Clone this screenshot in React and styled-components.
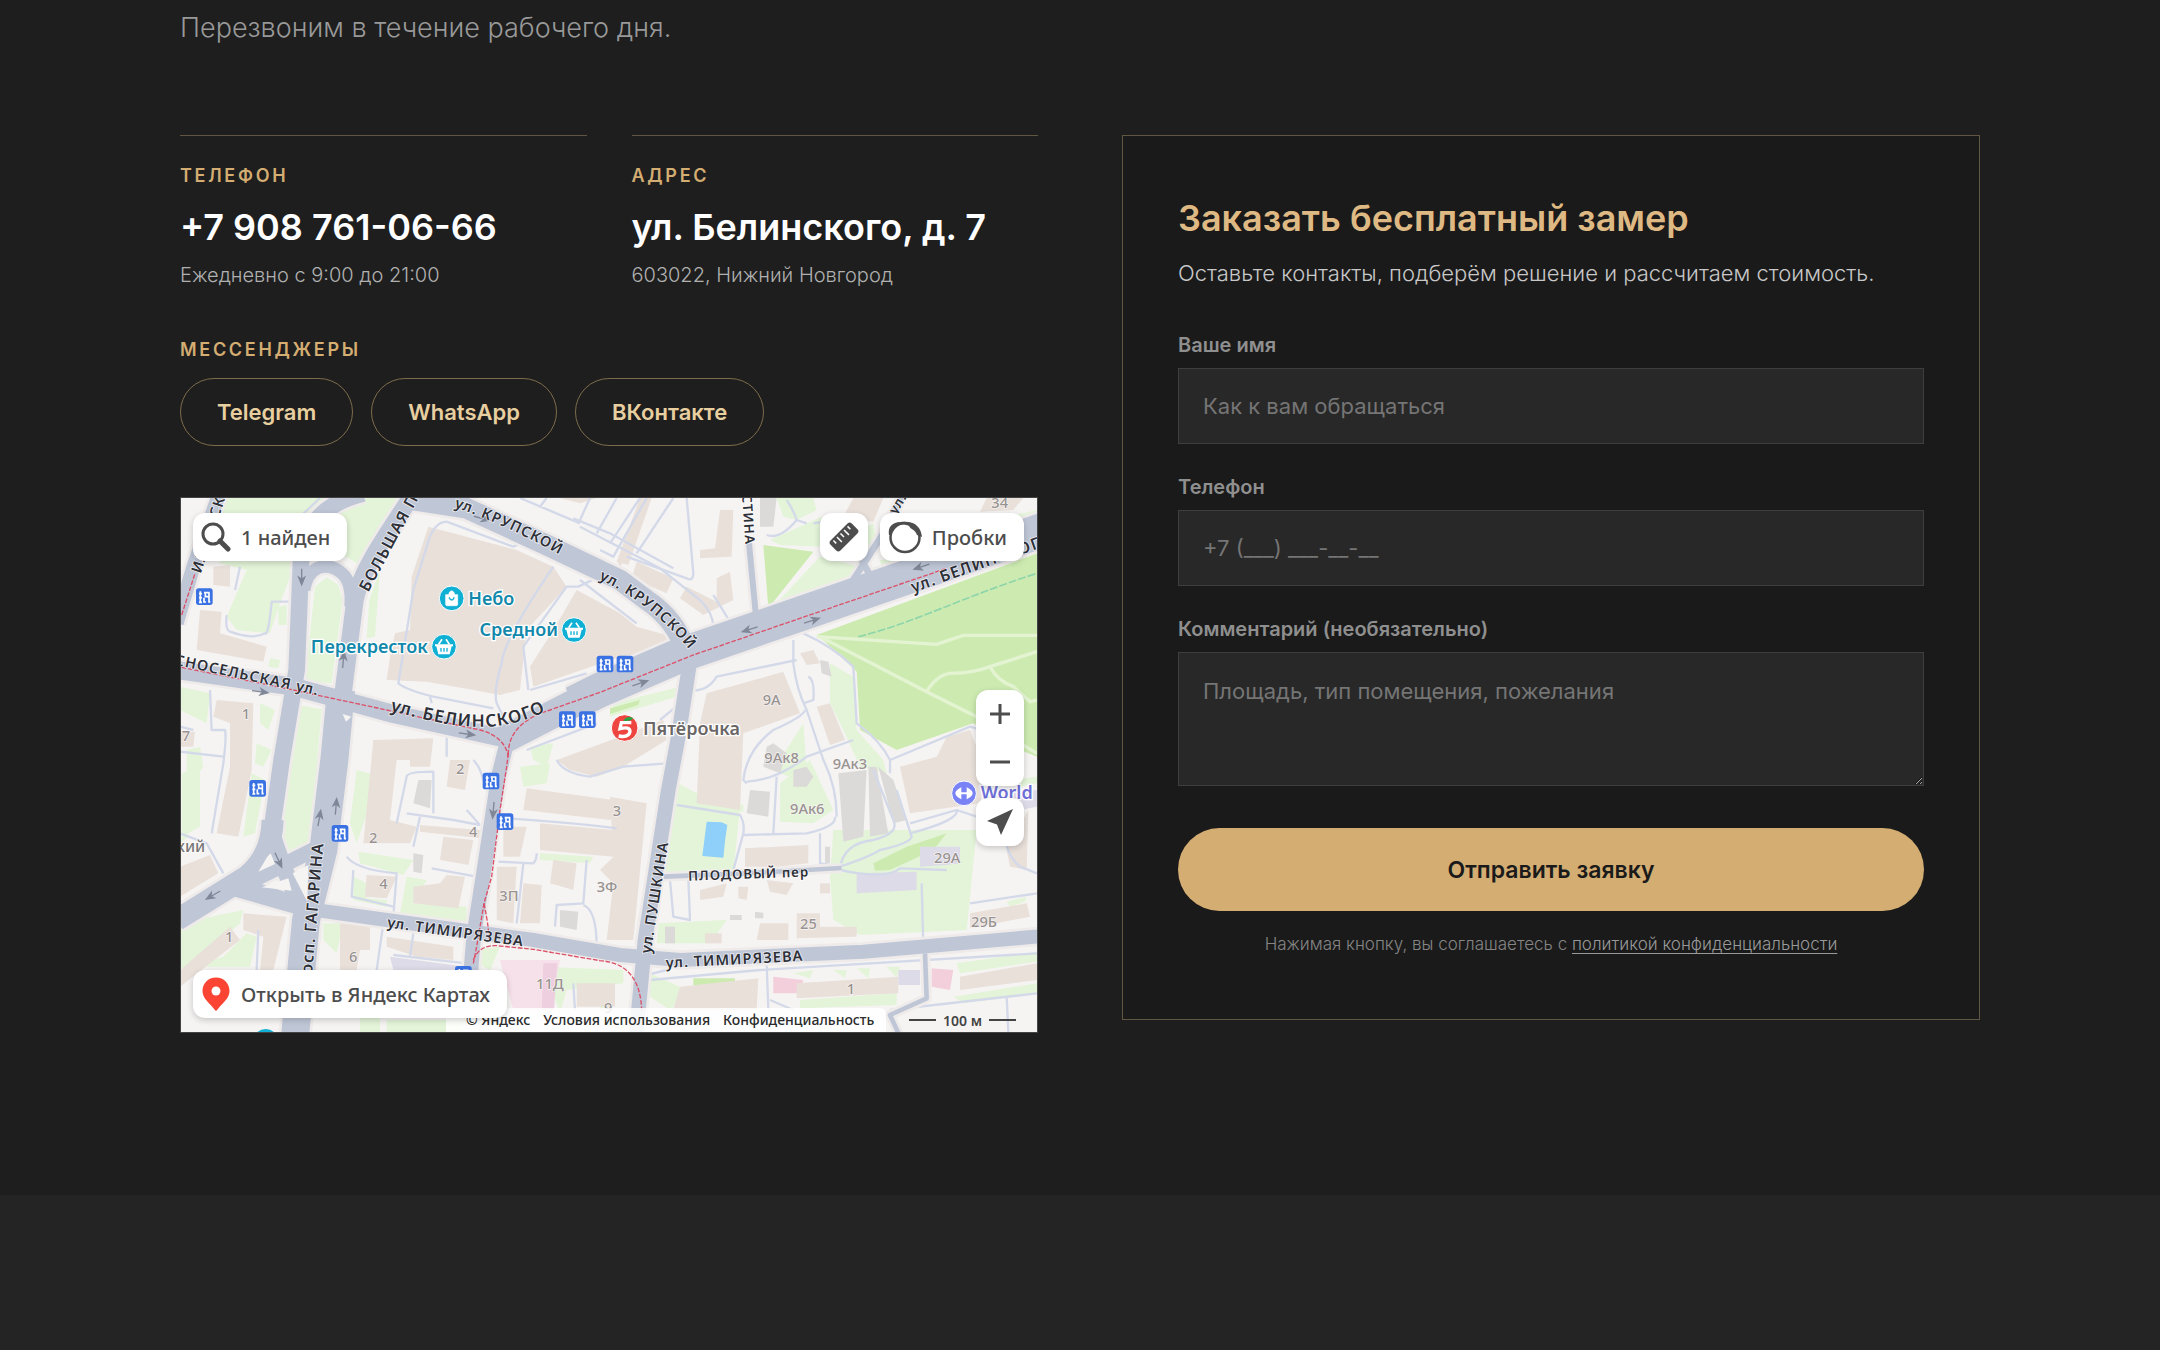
import React, { useState } from 'react';
import styled, { createGlobalStyle } from 'styled-components';

const GlobalStyle = createGlobalStyle`
  * {
    box-sizing: border-box;
  }

  body {
    margin: 0;
    background: #242424;
    color: #fff;
    font-family: 'Inter', sans-serif;
  }
`;

const Section = styled.section`
  background: #1e1e1e;
  padding: 6px 40px 162px;
`;

const Container = styled.div`
  max-width: 1800px;
  margin: 0 auto;
`;

const Lead = styled.p`
  margin: 0 0 85px;
  font-size: 27px;
  line-height: 44px;
  font-weight: 300;
  color: #999;
`;

const Columns = styled.div`
  display: grid;
  grid-template-columns: repeat(auto-fit, minmax(min(100%, 640px), 1fr));
  gap: 84px;
  align-items: start;
`;

const InfoGrid = styled.div`
  display: grid;
  grid-template-columns: 1fr 1fr;
  gap: 45px;
`;

const InfoItem = styled.div`
  border-top: 1px solid #615642;
  padding-top: 28px;
`;

const Caption = styled.div`
  font-size: 18px;
  line-height: 24px;
  font-weight: 600;
  letter-spacing: 0.15em;
  text-transform: uppercase;
  color: #d4ad72;
`;

const InfoTitle = styled.div`
  margin: 17px 0 10px;
  font-size: 36px;
  line-height: 44px;
  font-weight: 600;
  color: #fff;

  a {
    color: inherit;
    text-decoration: none;
  }
`;

const InfoNote = styled.div`
  font-size: 20px;
  line-height: 32px;
  font-weight: 300;
  color: #b0b0b0;
`;

const Messengers = styled.div`
  margin: 47px 0 51px;
`;

const Pills = styled.div`
  display: flex;
  flex-wrap: wrap;
  gap: 18px;
  margin-top: 16px;
`;

const Pill = styled.a`
  display: flex;
  align-items: center;
  height: 68px;
  padding: 0 36px;
  border: 1px solid #7d6c4c;
  border-radius: 68px;
  font-size: 22px;
  font-weight: 600;
  color: #e8cfa0;
  text-decoration: none;
`;

const Card = styled.form`
  padding: 54px 55px 61px;
  background: #1a1a1a;
  border: 1px solid #615642;
`;

const CardTitle = styled.h3`
  margin: 0;
  font-size: 36px;
  line-height: 56px;
  font-weight: 600;
  color: #dfb983;
`;

const CardText = styled.p`
  margin: 9px 0 39px;
  font-size: 22px;
  line-height: 36px;
  font-weight: 300;
  color: #c8c8c8;
`;

const Field = styled.div`
  display: flex;
  flex-direction: column;
  gap: 8px;
  margin-bottom: 28px;

  label {
    font-size: 20px;
    line-height: 30px;
    font-weight: 600;
    color: #8f8f8f;
  }
`;

const Input = styled.input`
  width: 100%;
  height: ${p => (p.$tall ? 134 : 76)}px;
  padding: ${p => (p.$tall ? '20px' : '0')} 24px;
  border: 1px solid #3e3e3e;
  border-radius: 0;
  background: #282828;
  font-family: inherit;
  font-size: 22px;
  line-height: 36px;
  color: #fff;
  outline: none;
  resize: vertical;

  &::placeholder {
    color: #757575;
  }
`;

const Submit = styled.button`
  width: 100%;
  height: 83px;
  margin-top: 14px;
  border: 0;
  border-radius: 83px;
  background: #d4ad72;
  font-family: inherit;
  font-size: 23px;
  font-weight: 600;
  color: #1a1a1a;
  cursor: pointer;
`;

const Consent = styled.p`
  margin: 19px 0 0;
  font-size: 17px;
  line-height: 28px;
  font-weight: 300;
  text-align: center;
  color: #858585;

  a {
    color: #999;
    text-underline-offset: 3px;
  }
`;

/* ---------- map ---------- */

const MapFrame = styled.div`
  position: relative;
  aspect-ratio: 858 / 536;
  overflow: hidden;
  border: 1px solid #444;
  background: #f6f4f3;
  font-family: 'Noto Sans', sans-serif;
  font-weight: 500;
  color: #4d4d4d;

  > svg {
    display: block;
    width: 100%;
    height: 100%;
  }
`;

const TopBar = styled.div`
  position: absolute;
  top: 15px;
  left: 12px;
  right: 13px;
  display: flex;
  gap: 12px;
`;

const MapButton = styled.button`
  display: flex;
  align-items: center;
  justify-content: ${p => (p.$square ? 'center' : 'flex-start')};
  gap: 10px;
  width: ${p => (p.$square ? '48px' : 'auto')};
  height: 48px;
  padding: ${p => (p.$square ? '0' : '0 17px 0 8px')};
  border: 0;
  border-radius: 12px;
  background: #fff;
  box-shadow: 0 2px 6px rgba(0, 0, 0, 0.2);
  font: inherit;
  font-size: 20px;
  color: #4d4d4d;
  text-decoration: none;
  white-space: nowrap;

  &.push {
    margin-left: auto;
  }
`;

const SideBar = styled.div`
  position: absolute;
  top: 192px;
  right: 13px;
  display: flex;
  flex-direction: column;
  gap: 12px;
`;

const ZoomGroup = styled.div`
  border-radius: 12px;
  background: #fff;
  box-shadow: 0 2px 6px rgba(0, 0, 0, 0.2);

  button {
    box-shadow: none;
    background: none;
  }
`;

const OpenMap = styled.div`
  position: absolute;
  left: 12px;
  bottom: 14px;
`;

const Copyright = styled.div`
  position: absolute;
  left: 265px;
  bottom: 0;
  display: flex;
  gap: 13px;
  height: 24px;
  padding: 0 12px 0 20px;
  background: rgba(255, 255, 255, 0.85);
  border-radius: 0 6px 0 0;
  font-size: 14px;
  line-height: 24px;

  a {
    color: #2b2b2b;
    text-decoration: none;
  }
`;

const Scale = styled.div`
  position: absolute;
  right: 21px;
  bottom: 0;
  display: flex;
  align-items: center;
  gap: 7px;
  height: 24px;
  font-size: 14px;
  font-weight: 600;
  color: #444;

  &::before,
  &::after {
    content: '';
    width: 27px;
    height: 2px;
    background: #444;
  }
`;

const greens = [
  '130,24 440,24 350,110 342,230 300,340 270,430 170,420 140,380 200,240 120,220',
  '560,24 690,24 640,110 545,230 500,200 430,205 385,200 385,130 450,70',
  '405,290 440,262 475,285 488,330 455,580 375,572',
  '355,645 425,658 412,810 388,1065 335,1088 300,1040 325,810',
  '568,330 600,240 585,440 560,445', '0,590 90,610 80,700 0,660', '20,780 60,770 70,830 20,900',
  '5,850 60,830 60,1010 5,1040', '215,850 255,870 225,1030 190,1040', '240,640 285,660 265,720 240,700',
  '230,760 275,780 250,830 225,820', '295,350 320,345 320,405 295,405', '270,505 300,510 295,535 265,530',
  '1790,24 1900,24 1910,60 1850,90 1810,80', '1770,150 1925,80 1930,170 1800,165',
  '1920,200 2040,230 1980,290 1770,360', '2040,120 2080,100 2090,160 2050,230 2030,200',
  '2100,210 2400,200 2110,260', '2390,100 2571,60 2571,80 2400,130',
  '1485,905 1680,955 1660,1150 1450,1170', '1495,880 1550,910 1690,945 1690,965 1490,925',
  '1800,880 1890,810 1960,960 1900,1000 1800,995', '1780,840 1870,700 1880,840 1850,870',
  '1950,520 2020,560 2030,720 2110,810 2120,850 2040,830 1990,720 1950,640',
  '1960,1020 2390,1020 2360,1320 2040,1335 1960,1290 1950,1160', '1435,1300 1640,1290 1590,1360 1430,1360',
  '1020,830 1110,820 1100,880 1030,890', '1050,770 1120,760 1100,830 1060,810',
  '1300,640 1500,590 1490,620 1290,680', '535,1085 700,1110 670,1155 540,1120',
  '680,1160 740,1170 700,1240 860,1250 860,1300 660,1270', '520,1160 560,1180 560,1225 620,1230 620,1250 520,1230',
  '0,1300 190,1260 180,1300 20,1440 0,1430', '40,1430 130,1400 200,1330 230,1340 210,1430',
  '430,1300 490,1300 470,1390 430,1350', '600,860 530,1060 510,1000 530,840', '1080,1090 1240,1100 1230,1120 1080,1110',
  '1090,1430 1330,1440 1330,1480 1160,1500 1140,1570', '890,1380 960,1370 930,1440 890,1420',
  '1260,1450 1310,1450 1290,1560 1260,1560', '1410,1450 1520,1500 1470,1560 1410,1520',
  '1840,1450 1900,1440 1890,1465', '1960,1440 2000,1440 1995,1465', '2030,1435 2070,1435 2065,1465',
  '2120,1430 2160,1430 2150,1465', '1860,1530 2150,1510 2150,1545 1860,1555', '2330,1420 2571,1385 2571,1415 2340,1450',
  '2320,1520 2571,1480 2571,1510 2350,1540', '2480,1235 2540,1220 2535,1235 2490,1250', '1460,1520 1480,1510 1480,1560 1460,1550',
  '540,1560 600,1550 600,1626 540,1626', '620,1590 860,1590 840,1626 620,1626',
  '2490,870 2571,860 2571,880 2520,890', '0,1060 20,1000 25,1040',
];

const brightGreens = [
  '1910,435 2571,190 2571,800 2520,780 2380,700 2150,780 2040,720 2030,545 1940,460',
  '1750,165 1900,185 1765,355', '2080,1120 2180,1070 2300,1030 2260,1080 2130,1140 2085,1142',
  '1540,1465 1665,1465 1665,1486 1540,1486', '1290,655 1380,630 1375,645 1290,672',
];

const buildings = [
  '745,110 820,130 1010,180 1120,230 1160,290 1040,420 1020,600 960,615 880,600 740,575 620,570 630,500 645,430 690,420 695,260',
  '1190,300 1320,370 1370,410 1480,440 1450,480 1320,500 1060,590 1050,530 1120,420',
  '60,360 125,365 120,430 260,470 250,515 50,480', '110,630 220,640 215,840 175,1040 110,1030 150,830 150,700 100,680',
  '580,750 760,745 750,830 690,830 690,810 650,810 630,990 710,1010 690,1060 550,1060',
  '100,230 150,225 150,290 100,285', '0,725 45,725 40,770 0,770',
  '1580,610 1810,545 1860,670 1690,730 1680,960 1550,940 1560,700', '1620,60 1660,60 1655,200 1560,205 1560,180 1605,175',
  '1370,215 1480,265 1460,310 1355,265', '1520,290 1610,335 1610,265 1650,245 1660,330 1570,375 1500,325',
  '1380,24 1415,24 1345,225 1310,215', '2020,24 2110,24 2080,95 1990,80', '2420,24 2530,24 2500,60 2400,65',
  '2300,740 2370,720 2420,850 2400,940 2190,970 2160,830 2270,800', '1910,650 1950,640 1995,750 1950,765',
  '1860,490 1900,480 1920,520 1880,525', '1130,810 1320,740 1450,690 1460,750 1330,830 1250,860 1170,840',
  '1040,895 1300,930 1350,940 1330,980 1290,990 1030,960', '1080,1000 1300,1020 1300,1100 1080,1080',
  '1290,920 1400,940 1360,1350 1280,1350 1300,1180 1260,1140 1300,1100', '970,1010 1040,1010 1020,1100 970,1100',
  '950,1130 1010,1130 1000,1300 950,1290', '1120,1110 1190,1120 1180,1200 1110,1180', '1030,1180 1085,1185 1080,1300 1020,1300',
  '790,1040 880,1050 865,1125 780,1110', '700,1190 780,1180 800,1155 855,1160 835,1255 700,1240',
  '560,1155 650,1160 620,1225 555,1220', '480,1300 570,1300 570,1380 540,1380 530,1440 480,1440',
  '620,1340 820,1370 820,1410 710,1400 620,1370', '190,1270 320,1280 280,1440 240,1440 250,1340 190,1320',
  '150,1310 180,1350 0,1490 0,1440', '0,1130 90,1095 115,1150 0,1220', '1190,1480 1305,1480 1305,1550 1190,1550',
  '810,810 870,810 855,900 800,890', '720,1005 900,1020 900,1045 720,1025', '1695,1075 1885,1065 1885,1120 1790,1130 1695,1130',
  '1560,1200 1640,1180 1630,1220 1560,1230', '1675,1190 1705,1190 1700,1230 1675,1225', '1760,1170 1840,1180 1820,1215 1770,1205',
  '1920,1180 1950,1180 1950,1210 1920,1210', '1850,1270 1920,1270 1920,1310 2030,1310 2030,1340 1850,1345',
  '1740,1300 1825,1300 1825,1350 1730,1350', '1575,1330 1625,1330 1625,1360 1575,1360',
  '1500,1490 1735,1465 1730,1560 1480,1560', '1850,1480 2155,1460 2155,1510 1850,1525',
  '2340,1460 2571,1420 2571,1470 2340,1500', '2370,1270 2540,1240 2550,1280 2370,1315', '2480,1080 2545,960 2540,1140 2490,1130',
  '1140,24 1250,24 1200,40', '1310,210 1340,200 1320,230',
];

const greys = [
  '1975,850 2060,840 2050,1040 1990,1055', '2065,830 2090,830 2125,1030 2070,1040', '2095,830 2140,870 2180,990 2140,1000',
  '715,870 755,870 750,955 700,940', '700,1090 730,1095 725,1150 700,1145', '1760,770 1780,760 1820,790 1800,850 1750,830',
  '1840,840 1880,830 1900,860 1880,890 1840,890', '1710,900 1770,905 1765,980 1700,970', '1920,510 1945,515 1955,560 1925,550',
  '1140,1260 1195,1265 1190,1320 1140,1310', '1650,1275 1685,1275 1685,1290 1650,1290', '1725,1265 1750,1268 1750,1285 1725,1285',
  '1455,1310 1485,1310 1485,1360 1455,1360', '1740,24 1790,24 1780,110 1740,110', '1935,1070 1950,1070 1950,1120 1935,1120',
];

const lavender = [
  '2220,1070 2340,1070 2340,1120 2300,1125 2220,1130', '2030,1150 2210,1145 2210,1200 2030,1210',
  '2155,1440 2220,1440 2220,1485 2155,1485', '630,1400 860,1430 860,1440 640,1440', '2480,910 2571,900 2571,950 2520,960',
];

const lanes = [
  'M1250,130 L1310,24 M1290,160 L1380,24 M1180,85 L1290,130 L1480,235 M1520,24 L1540,250 Q1540,275 1520,265 L1340,200',
  'M1480,24 L1370,190 M1260,180 L1300,200 L1400,24 M1020,24 L1200,100 M1100,24 L1080,50 M1230,24 L1200,90 M1200,110 L1440,235 L1560,330 Q1600,370 1600,410',
  'M1200,270 L1370,400 M1310,235 L1195,290 L1160,290 L1030,470 Q1040,560 1045,600',
  'M800,95 L1000,170 L1090,130 M800,95 Q760,95 740,170 L700,300 L655,580 Q680,600 760,620 L940,655',
  'M1120,230 Q970,450 965,520 Q940,600 950,640 L975,690 M1050,600 L1220,550 M750,620 L755,640',
  'M1600,315 L1650,395 M1580,410 L1710,375 M1850,90 L1880,100 M1760,135 Q1800,150 1850,90 Q1840,60 1820,30 M1900,100 L1960,90',
  'M340,335 L275,335 Q265,440 255,430 Q220,450 150,425 Q135,420 140,375 M180,230 L165,300',
  'M90,600 L95,720 L135,720 Q140,740 130,820 L95,1030 M0,710 L40,720 M0,785 L130,800',
  'M1520,600 Q1580,610 1610,560 L1850,510 M1840,450 L1840,520 Q1850,600 1880,660 L1930,810 Q1970,890 1970,980',
  'M1885,560 Q1905,570 1900,630 L1870,640 M1875,660 Q1870,680 1780,720 Q1700,780 1690,870 L1700,880 M1790,860 L1780,1030',
  'M1700,875 Q1790,870 1880,800 L2020,750 M1870,430 Q1960,470 2020,530 L2030,700 Q2100,750 2130,810 L2130,850 M2130,810 L2370,710 Q2420,720 2440,760',
  'M1490,945 L1680,975 Q1695,1000 1690,1030 L1660,1140 M1690,1035 L1880,1030 Q1970,1010 1965,980 M1920,1030 L1920,1120 L1980,1130',
  'M1980,1135 Q1990,1060 2080,1050 Q2160,1030 2140,990 L2080,840 M1980,1130 Q2070,1100 2100,1080 Q2190,1060 2195,1040 L2150,900',
  'M2190,1000 L2330,960 Q2340,990 2190,1030 M2330,960 L2390,980 M2470,1020 Q2480,1100 2520,1130 L2571,1150 M2370,1240 L2571,1210',
  'M1980,1140 Q2120,1170 2160,1135 L2300,1140 M2225,1180 L2230,1370 M1470,1170 L1480,1280 L1530,1290 L1525,1165',
  'M1130,810 Q1150,850 1230,860 L1330,830 L1460,820 M980,985 Q1200,1000 1310,1015 M955,1115 L1060,1120 Q1070,1110 1070,1090 M1030,1120 L1010,1300',
  'M1125,1310 L1130,1245 L1210,1240 L1220,1110 M1210,1245 Q1250,1260 1250,1370 M840,730 L960,760 M800,740 L800,800',
  'M650,1000 L680,860 Q680,845 760,845 L760,970 M680,970 L820,990 L900,1005 M720,980 L700,1070 M755,1135 L890,1160',
  'M500,1100 Q530,1140 650,1150 L640,1280 M520,1140 L515,1220 L640,1250 M610,1300 L590,1440 M700,1330 L690,1400 M640,1395 L860,1420',
  'M0,1030 L80,1060 L130,1150 M235,1320 L230,1440 M1760,1420 L1765,1560 M1410,1470 L1740,1440 L2571,1390',
  'M2130,1560 L2571,1510 M2480,1520 L2485,1626 M1770,1530 L1840,1560 M1040,780 L1250,700 M420,24 L350,90',
  'M1180,1480 L1185,1560 M880,810 Q900,830 910,870 M860,960 L900,1005 M1440,690 L1500,640 M1380,1460 L1460,1440',
];

const roads = [
  { d: 'M118,10 L40,230 L-10,400', w: 42 },
  { d: 'M550,10 C430,40 362,110 362,240 L350,540 L305,810 L278,1000', w: 50 },
  { d: 'M372,300 C385,225 440,215 480,245 Q518,270 512,350', w: 38 },
  { d: 'M700,10 C645,100 545,230 525,330 L488,620', w: 52 },
  { d: 'M483,600 L463,810 L430,1080 L378,1290 L345,1640', w: 84 },
  { d: 'M-10,540 L340,590 L640,672 L970,745', w: 54 },
  { d: 'M960,755 L1120,672 L1260,600', w: 84 },
  { d: 'M1180,640 L1260,600 L1510,492 L1860,372 L2590,120', w: 104 },
  { d: 'M700,30 L860,55 L1100,165 L1320,270 L1400,330 Q1490,390 1520,490', w: 62 },
  { d: 'M1532,500 L1495,740 L1465,900 L1395,1350 L1368,1640', w: 44 },
  { d: 'M985,740 L955,860 L912,1140 L882,1330 L872,1450', w: 44 },
  { d: 'M230,1200 L420,1262 L620,1290 L1060,1350 L1320,1395 L1500,1410 L2050,1385 L2590,1338', w: 42 },
  { d: 'M278,990 Q275,1100 200,1160 L-10,1290', w: 66 },
  { d: 'M180,1190 L300,1130 L420,1070', w: 46 },
  { d: 'M275,1030 L310,1130 L370,1270', w: 50 },
  { d: 'M150,1190 L360,1250', w: 50 },
  { d: 'M1707,160 L1730,400', w: 18 },
  { d: 'M2000,300 L2110,130 L2170,10 M2045,210 L2075,265', w: 20 },
  { d: 'M1450,1160 L1700,1150 L1985,1134', w: 14 },
  { d: 'M2235,1390 L2240,1525 L2130,1575 L2160,1640', w: 14 },
];

const transit = [
  'M5,375 L45,250',
  'M5,532 L340,600 L620,660 L900,720 Q975,740 985,800 Q980,700 1110,660 L1260,607 L1540,495 L1860,385 L2300,235',
  'M985,790 L980,830 L960,960 L935,1160 L912,1240 L890,1370 L880,1420',
  'M912,1240 Q930,1330 925,1345 M880,1410 Q900,1360 960,1368 L1060,1378 L1260,1412 Q1380,1420 1385,1560',
];

const arrows = [
  [240, 605, 8], [860, 732, 8], [905, 85, 15], [1380, 580, -18], [1895, 392, -18], [1710, 418, 162], [2225, 230, 162],
  [365, 260, 90], [490, 510, -85], [468, 950, -85], [418, 985, -80], [295, 1110, 65], [100, 1215, 150], [940, 960, 95],
];

const stops = [
  [48, 295], [1250, 497], [1310, 497], [1137, 664], [1197, 664],
  [208, 870], [455, 1005], [908, 848], [950, 970], [825, 1428],
];

const houses = [
  ['1', 185, 688], ['7', 5, 752], ['2', 828, 852], ['2', 567, 1058], ['4', 867, 1042], ['4', 598, 1197], ['6', 507, 1415],
  ['1', 135, 1356], ['3П', 958, 1234], ['3Ф', 1250, 1206], ['3', 1298, 978], ['9А', 1748, 646], ['9Ак8', 1753, 820],
  ['9Ак3', 1958, 838], ['9Ак6', 1830, 972], ['25', 1860, 1317], ['29А', 2262, 1118], ['29Б', 2373, 1310],
  ['1', 2000, 1511], ['11Д', 1068, 1497], ['34', 2434, 54], ['9', 1272, 1568],
];

const MapDrawing = () => (
  <svg viewBox="3 24 2568 1602" preserveAspectRatio="xMidYMid slice" aria-hidden="true">
    <defs>
      <path id="krupskoy1" d="M822,52 Q960,95 1180,215" />
      <path id="krupskoy2" d="M1256,268 Q1420,340 1545,500" />
      <path id="belinskogo" d="M630,662 C800,705 950,755 1140,640" />
      <path id="belinskogo2" d="M2200,308 L2590,170" />
    </defs>

    <g fill="#e3f4d8">{greens.map(p => <polygon key={p} points={p} />)}</g>
    <g fill="#cdebb1">{brightGreens.map(p => <polygon key={p} points={p} />)}</g>
    <g fill="#f6e0e9">
      <polygon points="960,1410 1140,1410 1110,1560 1000,1560" />
      <polygon fill="#eecfdf" points="1090,1420 1132,1420 1122,1560 1085,1560" />
      <polygon fill="#f3cfdc" points="1780,1460 1870,1470 1860,1510 1780,1510" />
      <polygon fill="#f3cfdc" points="2255,1435 2320,1440 2310,1500 2255,1490" />
    </g>
    <g fill="#e9e0da">{buildings.map(p => <polygon key={p} points={p} />)}</g>
    <g fill="#dcdad9">{greys.map(p => <polygon key={p} points={p} />)}</g>
    <g fill="#dedbe9">{lavender.map(p => <polygon key={p} points={p} />)}</g>
    <polygon fill="#8fd0fb" points="1580,995 1625,997 1642,1005 1636,1045 1630,1103 1567,1098" />

    <g fill="none" stroke="#e4f4d3" strokeWidth="10">
      <path d="M1910,440 L2270,463 L2350,436 L2571,436" />
      <path d="M1920,440 L2240,605 L2390,680" />
      <path d="M2240,605 Q2270,555 2310,550 Q2380,550 2430,530 L2571,485" />
      <path d="M2430,530 Q2450,570 2500,590 L2550,635 L2571,630" />
      <path d="M2530,765 L2571,790" />
    </g>
    <path d="M2035,440 C2200,400 2350,320 2571,250" fill="none" stroke="#8fd5ab" strokeWidth="5" strokeDasharray="24 6" />

    <g fill="none" stroke="#d3d9e8" strokeWidth="7" strokeLinejoin="round">
      {lanes.map(d => <path key={d} d={d} />)}
    </g>
    <g fill="none" stroke="#efebea" strokeLinejoin="round">
      {roads.map(r => <path key={r.d} d={r.d} strokeWidth={r.w + 16} />)}
    </g>
    <g fill="none" stroke="#bfc7d7" strokeLinejoin="round">
      {roads.map(r => <path key={r.d} d={r.d} strokeWidth={r.w} />)}
    </g>
    <g fill="#f6f4f3">
      <polygon points="488,672 514,680 498,695" />
      <polygon points="245,1192 325,1165 335,1202" />
      <polygon points="338,1150 385,1125 382,1235" />
      <polygon points="262,1100 272,1090 285,1122 235,1145" />
    </g>
    <g fill="none" stroke="#dc5068" strokeWidth="4" strokeDasharray="14 5">
      {transit.map(d => <path key={d} d={d} />)}
    </g>
    <g fill="#7f8798" stroke="#7f8798" strokeWidth="4">
      {arrows.map(([x, y, a]) => (
        <path key={`${x}-${y}`} transform={`translate(${x} ${y}) rotate(${a})`} d="M-24,0 H6 M2,-9 L24,0 L2,9 L8,0 Z" />
      ))}
    </g>

    <g fill="#989290" fontSize="44" stroke="#f6f4f3" strokeWidth="4" paintOrder="stroke">
      {houses.map(([t, x, y]) => <text key={`${x}-${y}`} x={x} y={y}>{t}</text>)}
    </g>

    {stops.map(([x, y]) => (
      <g key={`${x}-${y}`} transform={`translate(${x} ${y})`}>
        <rect width="50" height="50" rx="8" fill="#3a72e4" />
        <path d="M9,16 H18 M13,9 V42 M9,28 H18 M9,42 H18 M24,13 H41 M28,13 V25 H39 V13 M24,28 V41 H30 M39,25 V41 H43" fill="none" stroke="#fff" strokeWidth="5" />
      </g>
    ))}

    <g fill="#2e3038" fontSize="44" fontWeight="600" letterSpacing="3" stroke="#ffffff" strokeOpacity="0.7" strokeWidth="5" paintOrder="stroke">
      <text><textPath href="#krupskoy1">ул. КРУПСКОЙ</textPath></text>
      <text><textPath href="#krupskoy2">ул. КРУПСКОЙ</textPath></text>
      <text fontSize="52"><textPath href="#belinskogo">ул. БЕЛИНСКОГО</textPath></text>
      <text fontSize="48"><textPath href="#belinskogo2">ул. БЕЛИНСКОГО</textPath></text>
      <text transform="translate(565 308) rotate(-62)" fontSize="48">БОЛЬШАЯ П</text>
      <text transform="translate(62 252) rotate(-72)">ИЛЬИНСК</text>
      <text transform="translate(-18 524) rotate(12)">СНОСЕЛЬСКАЯ ул.</text>
      <text transform="translate(1686 14) rotate(86)" fontSize="40">СТИНА</text>
      <text transform="translate(2148 75) rotate(-58)" fontSize="40">ул.</text>
      <text transform="translate(396 1452) rotate(-85)" fontSize="48">осп. ГАГАРИНА</text>
      <text transform="translate(620 1312) rotate(8)">ул. ТИМИРЯЗЕВА</text>
      <text transform="translate(1458 1434) rotate(-3)">ул. ТИМИРЯЗЕВА</text>
      <text transform="translate(1412 1392) rotate(-81)">ул. ПУШКИНА</text>
      <text transform="translate(1525 1172) rotate(-2)" fontSize="40">ПЛОДОВЫЙ пер</text>
      <text x="-12" y="1087" fontSize="48" fontWeight="500" fill="#777" letterSpacing="0">кий</text>
    </g>

    <g fontSize="54" fontWeight="600" fill="#1288ab" stroke="#fff" strokeWidth="8" paintOrder="stroke">
      <text x="865" y="345">Небо</text>
      <text x="1134" y="438" textAnchor="end">Средной</text>
      <text x="743" y="488" textAnchor="end">Перекресток</text>
      <text x="1389" y="735" fill="#6a6665">Пятёрочка</text>
      <text x="2402" y="928" fill="#6d6fd8">World</text>
    </g>

    <circle cx="815" cy="325" r="37" fill="#10afd4" stroke="#fff" strokeWidth="3" />
    <path d="M797,314 H833 V343 Q833,347 829,347 H801 Q797,347 797,343 Z M807,314 V309 Q815,296 823,309 V314" fill="#fff" stroke="#fff" strokeWidth="2" />
    <path d="M807,322 Q815,338 823,322" fill="none" stroke="#10afd4" strokeWidth="4" />
    {[[1182, 420], [792, 470]].map(([x, y]) => (
      <g key={x} transform={`translate(${x} ${y})`}>
        <circle r="37" fill="#10afd4" stroke="#fff" strokeWidth="3" />
        <path d="M-27,-7 H27 V-1 H23 L17,23 H-17 L-23,-1 H-27 Z" fill="#fff" />
        <path d="M-16,-7 L-6,-22 M16,-7 L6,-22" stroke="#fff" strokeWidth="5" />
        <path d="M-9,4 V15 M0,4 V15 M9,4 V15" stroke="#10afd4" strokeWidth="4" />
      </g>
    ))}
    <circle cx="257" cy="1655" r="38" fill="#10afd4" />

    <circle cx="1334" cy="714" r="40" fill="#ee4540" stroke="#fff" strokeWidth="3" />
    <path d="M1354,698 H1324 L1320,716 Q1350,708 1350,725 Q1346,744 1316,738" fill="none" stroke="#fff" strokeWidth="10" />
    <path d="M1330,692 Q1340,676 1360,684 Q1350,696 1330,692" fill="#28a343" />

    <circle cx="2352" cy="910" r="37" fill="#7a83f5" stroke="#fff" strokeWidth="3" />
    <path d="M2344,892 Q2308,910 2344,928 Z M2360,892 Q2396,910 2360,928 Z M2344,907 H2360 V913 H2344 Z" fill="#fff" />
  </svg>
);

const SearchIcon = () => (
  <svg width="30" height="30" viewBox="0 0 30 30" fill="none" stroke="#4d4d4d">
    <circle cx="12" cy="12" r="10" strokeWidth="3" />
    <path d="M19 19 L27 27" strokeWidth="5" strokeLinecap="round" />
  </svg>
);

const RulerIcon = () => (
  <svg width="30" height="30" viewBox="0 0 30 30">
    <g transform="rotate(-45 15 15)">
      <rect x="0" y="8" width="30" height="14" rx="3" fill="#4d4d4d" />
      <path d="M5 10 V14 M10 10 V17 M15 10 V15 M20 10 V17 M25 10 V14" stroke="#fff" strokeWidth="1.5" />
    </g>
  </svg>
);

const TrafficIcon = () => (
  <svg width="34" height="34" viewBox="0 0 34 34" fill="none" stroke="#4d4d4d">
    <circle cx="17" cy="17.500" r="14.500" strokeWidth="2.5" />
    <path d="M1 15 C-1 4 9 1 18 2 C28 2 33 8 34 17 L29 15 C27 9 23 10 21 6 C13 2 5 6 3 15 Z" fill="#4d4d4d" stroke="none" />
  </svg>
);

const PinIcon = () => (
  <svg width="30" height="34" viewBox="0 0 30 34">
    <path d="M15 0.500 C7 0.500 1.500 6.500 1.500 14 C1.500 22 9 26 13.500 32.500 Q15 35 16.500 32.500 C21 26 28.500 22 28.500 14 C28.500 6.500 23 0.500 15 0.500 Z" fill="#fb4434" />
    <circle cx="15" cy="14" r="4.500" fill="#fff" />
  </svg>
);

const PlusIcon = () => (
  <svg width="22" height="22" viewBox="0 0 22 22" stroke="#4d4d4d" strokeWidth="3">
    <path d="M11 1 V21 M1 11 H21" />
  </svg>
);

const MinusIcon = () => (
  <svg width="22" height="22" viewBox="0 0 22 22" stroke="#4d4d4d" strokeWidth="3">
    <path d="M1 11 H21" />
  </svg>
);

const LocateIcon = () => (
  <svg width="28" height="28" viewBox="0 0 28 28">
    <path d="M27 1 L1 13 L11 16.500 L15 27 Z" fill="#4d4d4d" />
  </svg>
);

function YandexMap() {
  return (
    <MapFrame>
      <MapDrawing />
      <Copyright>
        <a href="#yandex">© Яндекс</a>
        <a href="#terms">Условия использования</a>
        <a href="#privacy">Конфиденциальность</a>
      </Copyright>
      <Scale>100 м</Scale>
      <TopBar>
        <MapButton type="button"><SearchIcon />1 найден</MapButton>
        <MapButton type="button" className="push" $square aria-label="Линейка"><RulerIcon /></MapButton>
        <MapButton type="button"><TrafficIcon />Пробки</MapButton>
      </TopBar>
      <SideBar>
        <ZoomGroup>
          <MapButton type="button" $square aria-label="Приблизить"><PlusIcon /></MapButton>
          <MapButton type="button" $square aria-label="Отдалить"><MinusIcon /></MapButton>
        </ZoomGroup>
        <MapButton type="button" $square aria-label="Моё местоположение"><LocateIcon /></MapButton>
      </SideBar>
      <OpenMap>
        <MapButton as="a" href="#map"><PinIcon />Открыть в Яндекс Картах</MapButton>
      </OpenMap>
    </MapFrame>
  );
}

function RequestForm() {
  const [form, setForm] = useState({ name: '', phone: '', comment: '' });
  const onChange = e => setForm({ ...form, [e.target.name]: e.target.value });

  return (
    <Card onSubmit={e => e.preventDefault()}>
      <CardTitle>Заказать бесплатный замер</CardTitle>
      <CardText>Оставьте контакты, подберём решение и рассчитаем стоимость.</CardText>
      <Field>
        <label htmlFor="name">Ваше имя</label>
        <Input id="name" name="name" value={form.name} onChange={onChange} placeholder="Как к вам обращаться" />
      </Field>
      <Field>
        <label htmlFor="phone">Телефон</label>
        <Input id="phone" name="phone" type="tel" value={form.phone} onChange={onChange} placeholder="+7 (___) ___-__-__" />
      </Field>
      <Field>
        <label htmlFor="comment">Комментарий (необязательно)</label>
        <Input as="textarea" $tall id="comment" name="comment" value={form.comment} onChange={onChange} placeholder="Площадь, тип помещения, пожелания" />
      </Field>
      <Submit type="submit">Отправить заявку</Submit>
      <Consent>
        Нажимая кнопку, вы соглашаетесь с <a href="#policy">политикой конфиденциальности</a>
      </Consent>
    </Card>
  );
}

function App() {
  return (
    <>
      <GlobalStyle />
      <Section>
        <Container>
          <Lead>Перезвоним в течение рабочего дня.</Lead>
          <Columns>
            <div>
              <InfoGrid>
                <InfoItem>
                  <Caption>Телефон</Caption>
                  <InfoTitle><a href="tel:+79087610666">+7 908 761-06-66</a></InfoTitle>
                  <InfoNote>Ежедневно с 9:00 до 21:00</InfoNote>
                </InfoItem>
                <InfoItem>
                  <Caption>Адрес</Caption>
                  <InfoTitle>ул. Белинского, д. 7</InfoTitle>
                  <InfoNote>603022, Нижний Новгород</InfoNote>
                </InfoItem>
              </InfoGrid>
              <Messengers>
                <Caption>Мессенджеры</Caption>
                <Pills>
                  <Pill href="#telegram">Telegram</Pill>
                  <Pill href="#whatsapp">WhatsApp</Pill>
                  <Pill href="#vk">ВКонтакте</Pill>
                </Pills>
              </Messengers>
              <YandexMap />
            </div>
            <RequestForm />
          </Columns>
        </Container>
      </Section>
    </>
  );
}

export default App;
